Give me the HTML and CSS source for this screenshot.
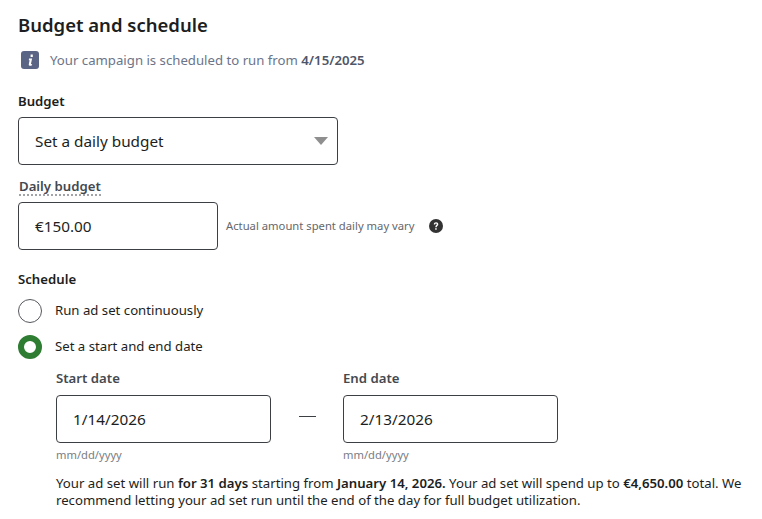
FILE: index.html
```html
<!DOCTYPE html>
<html lang="en">
<head>
  <meta charset="UTF-8" />
  <title>Budget and schedule</title>
  <link rel="stylesheet" href="styles.css">
</head>
<body>
  <div class="section">
    <h2 class="title">Budget and schedule</h2>

    <!-- Campaign notice -->
    <div class="notice">
      <svg class="notice-icon" width="18" height="18" viewBox="0 0 18 18">
        <rect width="18" height="18" rx="3" fill="#5a6484"/>
        <path d="M9.6 3.6h2.2v2.3H9.6zM8 7.6h3.1l-1.1 5.2c-.1.5.3.6.9.2l.3.9c-.9.7-1.7 1-2.4.9-.9-.1-1.2-.7-1-1.5l.8-4h-.8z" fill="#fff"/>
      </svg>
      <span>Your campaign is scheduled to run from <b>4/15/2025</b></span>
    </div>

    <!-- Budget -->
    <div class="label budget-label">Budget</div>
    <div class="box select">
      <span>Set a daily budget</span>
      <span class="caret"></span>
    </div>

    <div class="daily-label"><span>Daily budget</span></div>
    <div class="daily-row">
      <div class="box daily-input">€150.00</div>
      <span class="hint">Actual amount spent daily may vary</span>
      <svg class="help" width="14" height="14" viewBox="0 0 14 14">
        <circle cx="7" cy="7" r="7" fill="#333"/>
        <path d="M4.800 5.400c0-1.300 1-2.100 2.300-2.100s2.200.8 2.200 1.900c0 1.700-1.600 1.600-1.600 3H6.300c0-2 1.500-1.900 1.500-2.900 0-.4-.3-.7-.8-.7s-.8.3-.9.8z" fill="#fff"/>
        <rect x="6.200" y="9.200" width="1.500" height="1.500" fill="#fff"/>
      </svg>
    </div>

    <!-- Schedule -->
    <div class="label schedule-label">Schedule</div>
    <div class="radio-row">
      <span class="radio"></span>
      <span class="radio-text">Run ad set continuously</span>
    </div>
    <div class="radio-row second">
      <span class="radio checked"></span>
      <span class="radio-text">Set a start and end date</span>
    </div>

    <div class="dates">
      <div class="date-field">
        <div class="date-label">Start date</div>
        <div class="box date-input">1/14/2026</div>
        <div class="date-format">mm/dd/yyyy</div>
      </div>
      <div class="dash"></div>
      <div class="date-field">
        <div class="date-label">End date</div>
        <div class="box date-input">2/13/2026</div>
        <div class="date-format">mm/dd/yyyy</div>
      </div>
    </div>

    <p class="summary">Your ad set will run <b>for 31 days</b> starting from <b>January 14, 2026.</b> Your ad set will spend up to <b>€4,650.00</b> total. We<br>recommend letting your ad set run until the end of the day for full budget utilization.</p>
  </div>
</body>
</html>
```

FILE: styles.css
```css
/* Reset and basic styles */
* {
  box-sizing: border-box;
  margin: 0;
  padding: 0;
}
body {
  background: #fff;
  color: #1c1e21;
  font-family: 'Noto Sans', 'Open Sans', sans-serif;
  font-size: 13.2px;
  overflow: hidden;
}
b {
  font-weight: 600;
}
.section {
  padding: 12px 0 0 18px;
  height: 519px;
}
.title {
  font-size: 18.5px;
  font-weight: 600;
  line-height: 25px;
  color: #1c1e21;
}
.notice {
  display: flex;
  align-items: center;
  margin: 14px 0 0 3px;
  height: 18px;
  color: #6b7489;
}
.notice-icon {
  margin-right: 11px;
}
.notice b {
  color: #4f5668;
}
.label {
  font-weight: 600;
  line-height: 18px;
}
.budget-label {
  margin-top: 23px;
}
/* Bordered field */
.box {
  border: 1px solid #3c3f44;
  border-radius: 4px;
  height: 48px;
  display: flex;
  align-items: center;
  padding-left: 16px;
  font-size: 15.3px;
  background: #fff;
}
.select {
  width: 320px;
  margin-top: 7px;
  justify-content: space-between;
  padding-right: 9px;
}
.caret {
  width: 0;
  height: 0;
  border-left: 7px solid transparent;
  border-right: 7px solid transparent;
  border-top: 8px solid #8f8f8f;
}
.daily-label {
  margin: 12px 0 0 1px;
  height: 19px;
  font-weight: 600;
  color: #444950;
  line-height: 18px;
}
.daily-label span {
  display: inline-block;
  height: 19px;
  border-bottom: 2px dotted #a0a3a8;
}
.daily-row {
  display: flex;
  align-items: center;
  margin-top: 6px;
}
.daily-input {
  width: 200px;
  padding-bottom: 1px;
}
.hint {
  margin-left: 8px;
  padding-bottom: 2px;
  font-size: 11.25px;
  color: #65676b;
}
.help {
  margin-left: 15px;
}
.schedule-label {
  margin-top: 20px;
}
.radio-row {
  display: flex;
  align-items: center;
  gap: 13px;
  margin-top: 11px;
  height: 24px;
}
.radio-row.second {
  margin-top: 12px;
}
.radio-text {
  padding-bottom: 2px;
}
.radio {
  width: 24px;
  height: 24px;
  border-radius: 50%;
  border: 1px solid #55585e;
}
.radio.checked {
  border: 6.5px solid #2e7d32;
}
/* Date fields */
.dates {
  display: flex;
  margin: 10px 0 0 38px;
}
.date-field {
  width: 215px;
}
.date-label {
  font-weight: 600;
  color: #444950;
  line-height: 18px;
}
.date-input {
  margin-top: 8px;
}
.date-format {
  margin-top: 4px;
  font-size: 11.2px;
  line-height: 15px;
  color: #7a7d82;
}
.dash {
  width: 17px;
  height: 1px;
  background: #3c3f44;
  margin: 47px 27px 0 28px;
}
.summary {
  margin: 13px 0 0 38px;
  width: 700px;
  line-height: 17px;
}
```
